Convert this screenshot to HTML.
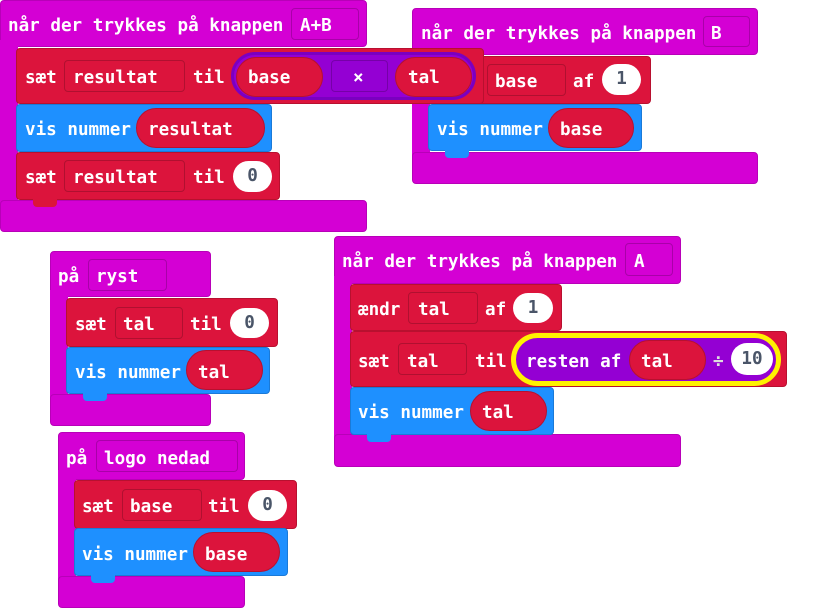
<!DOCTYPE html>
<html><head><meta charset="utf-8"><style>
body{margin:0;width:839px;height:609px;background:#fff;position:relative;overflow:hidden;font-family:"DejaVu Sans Mono","Liberation Mono",monospace;font-weight:bold;font-size:17.6px;color:#fff}
div{position:absolute;box-sizing:border-box}
.m{background:#d400d4;border:1px solid #b800b8;border-radius:4px}
.arm{border:none}
.r{background:#dc143c;border:1px solid #b8102f;border-radius:4px}
.b{background:#1e90ff;border:1px solid #1a7ad8;border-radius:4px}
.p{background:#9400d3;border:1px solid #7a00b0}
.f{border:1px solid rgba(0,0,0,.2);border-radius:4px}
.pill{border-radius:20px}
.w{background:#fff;border-radius:16px;color:#4a5568;text-align:center}
.t{line-height:20px;white-space:pre;margin-top:2px}
.w.t{margin-top:0}
.nr{background:#dc143c}.nb{background:#1e90ff}
.n{height:8px;width:24px;border-radius:0 0 4px 4px}
</style></head><body>

<!-- Block 1 -->
<div class="m" style="left:0;top:0;width:367px;height:47px"></div>
<div class="m arm" style="left:0;top:40px;width:18px;height:170px;border-radius:0"></div>
<div class="m" style="left:0;top:200px;width:367px;height:32px"></div>
<div class="t" style="left:8px;top:14px">når der trykkes på knappen</div>
<div class="f" style="left:291px;top:8px;width:68px;height:32px"></div>
<div class="t" style="left:300px;top:14px">A+B</div>

<!-- Block 2 -->
<div class="m" style="left:412px;top:8px;width:346px;height:47px"></div>
<div class="m arm" style="left:412px;top:50px;width:18px;height:110px;border-radius:0"></div>
<div class="m" style="left:412px;top:152px;width:346px;height:32px"></div>
<div class="t" style="left:421px;top:22px">når der trykkes på knappen</div>
<div class="f" style="left:703px;top:16px;width:47px;height:31px"></div>
<div class="t" style="left:711px;top:22px">B</div>
<div class="r" style="left:428px;top:56px;width:223px;height:48px"></div>
<div class="f" style="left:487px;top:64px;width:79px;height:32px"></div>
<div class="t" style="left:495px;top:70px">base</div>
<div class="t" style="left:573px;top:70px">af</div>
<div class="w t" style="left:602px;top:64px;width:39px;height:31px;line-height:31px">1</div>
<div class="b" style="left:428px;top:104px;width:214px;height:47px"></div>
<div class="nb n" style="left:445px;top:150px"></div>
<div class="t" style="left:437px;top:118px">vis nummer</div>
<div class="r pill" style="left:548px;top:108px;width:86px;height:40px"></div>
<div class="t" style="left:560px;top:118px">base</div>

<!-- Block 1 body -->
<div class="r" style="left:16px;top:48px;width:468px;height:56px"></div>
<div class="t" style="left:25px;top:66px">sæt</div>
<div class="f" style="left:64px;top:60px;width:121px;height:32px"></div>
<div class="t" style="left:73px;top:66px">resultat</div>
<div class="t" style="left:193px;top:66px">til</div>
<div class="p pill" style="left:231px;top:52px;width:245px;height:48px;border:3px solid #7a00c0;border-radius:24px"></div>
<div class="r pill" style="left:236px;top:57px;width:87px;height:40px"></div>
<div class="t" style="left:248px;top:66px">base</div>
<div class="f" style="left:331px;top:60px;width:57px;height:32px"></div>
<div class="t" style="left:353px;top:66px">×</div>
<div class="r pill" style="left:395px;top:57px;width:77px;height:40px"></div>
<div class="t" style="left:408px;top:66px">tal</div>
<div class="b" style="left:16px;top:104px;width:256px;height:48px"></div>
<div class="t" style="left:25px;top:118px">vis nummer</div>
<div class="r pill" style="left:136px;top:108px;width:129px;height:40px"></div>
<div class="t" style="left:148px;top:118px">resultat</div>
<div class="r" style="left:16px;top:152px;width:264px;height:48px"></div>
<div class="nr n" style="left:33px;top:199px"></div>
<div class="t" style="left:25px;top:166px">sæt</div>
<div class="f" style="left:64px;top:160px;width:121px;height:32px"></div>
<div class="t" style="left:73px;top:166px">resultat</div>
<div class="t" style="left:193px;top:166px">til</div>
<div class="w t" style="left:233px;top:161px;width:39px;height:31px;line-height:31px">0</div>

<!-- Block 3 -->
<div class="m" style="left:50px;top:251px;width:161px;height:46px"></div>
<div class="m arm" style="left:50px;top:290px;width:18px;height:110px;border-radius:0"></div>
<div class="m" style="left:50px;top:394px;width:161px;height:32px"></div>
<div class="t" style="left:58px;top:265px">på</div>
<div class="f" style="left:88px;top:259px;width:79px;height:32px"></div>
<div class="t" style="left:96px;top:265px">ryst</div>
<div class="r" style="left:66px;top:298px;width:212px;height:49px"></div>
<div class="t" style="left:75px;top:313px">sæt</div>
<div class="f" style="left:115px;top:307px;width:68px;height:32px"></div>
<div class="t" style="left:123px;top:313px">tal</div>
<div class="t" style="left:190px;top:313px">til</div>
<div class="w t" style="left:230px;top:308px;width:39px;height:30px;line-height:30px">0</div>
<div class="b" style="left:66px;top:347px;width:204px;height:47px"></div>
<div class="nb n" style="left:83px;top:393px"></div>
<div class="t" style="left:75px;top:361px">vis nummer</div>
<div class="r pill" style="left:186px;top:350px;width:77px;height:40px"></div>
<div class="t" style="left:198px;top:361px">tal</div>

<!-- Block 4 -->
<div class="m" style="left:58px;top:432px;width:187px;height:48px"></div>
<div class="m arm" style="left:58px;top:470px;width:18px;height:110px;border-radius:0"></div>
<div class="m" style="left:58px;top:576px;width:187px;height:32px"></div>
<div class="t" style="left:66px;top:447px">på</div>
<div class="f" style="left:96px;top:440px;width:142px;height:32px"></div>
<div class="t" style="left:104px;top:447px">logo nedad</div>
<div class="r" style="left:74px;top:480px;width:223px;height:49px"></div>
<div class="t" style="left:82px;top:495px">sæt</div>
<div class="f" style="left:122px;top:489px;width:80px;height:32px"></div>
<div class="t" style="left:130px;top:495px">base</div>
<div class="t" style="left:208px;top:495px">til</div>
<div class="w t" style="left:248px;top:490px;width:39px;height:31px;line-height:31px">0</div>
<div class="b" style="left:74px;top:528px;width:214px;height:48px"></div>
<div class="nb n" style="left:91px;top:575px"></div>
<div class="t" style="left:82px;top:543px">vis nummer</div>
<div class="r pill" style="left:193px;top:532px;width:87px;height:40px"></div>
<div class="t" style="left:205px;top:543px">base</div>

<!-- Block 5 -->
<div class="m" style="left:334px;top:236px;width:347px;height:48px"></div>
<div class="m arm" style="left:334px;top:276px;width:18px;height:165px;border-radius:0"></div>
<div class="m" style="left:334px;top:434px;width:347px;height:33px"></div>
<div class="t" style="left:342px;top:250px">når der trykkes på knappen</div>
<div class="f" style="left:625px;top:243px;width:48px;height:33px"></div>
<div class="t" style="left:634px;top:250px">A</div>
<div class="r" style="left:350px;top:284px;width:212px;height:47px"></div>
<div class="t" style="left:358px;top:298px">ændr</div>
<div class="f" style="left:408px;top:292px;width:70px;height:32px"></div>
<div class="t" style="left:418px;top:298px">tal</div>
<div class="t" style="left:485px;top:298px">af</div>
<div class="w t" style="left:513px;top:293px;width:40px;height:30px;line-height:30px">1</div>
<div class="r" style="left:350px;top:331px;width:437px;height:56px"></div>
<div class="t" style="left:358px;top:350px">sæt</div>
<div class="f" style="left:398px;top:343px;width:69px;height:32px"></div>
<div class="t" style="left:407px;top:350px">tal</div>
<div class="t" style="left:475px;top:350px">til</div>
<div class="p" style="left:511px;top:333px;width:270px;height:53px;border:5px solid #fff200;border-radius:27px"></div>
<div class="t" style="left:526px;top:350px">resten af</div>
<div class="r pill" style="left:629px;top:340px;width:77px;height:40px"></div>
<div class="t" style="left:641px;top:350px">tal</div>
<div class="t" style="left:713px;top:350px;color:#ddd">÷</div>
<div class="w t" style="left:731px;top:343px;width:42px;height:32px;line-height:32px">10</div>
<div class="b" style="left:350px;top:387px;width:204px;height:48px"></div>
<div class="nb n" style="left:367px;top:434px"></div>
<div class="t" style="left:358px;top:401px">vis nummer</div>
<div class="r pill" style="left:470px;top:391px;width:77px;height:40px"></div>
<div class="t" style="left:482px;top:401px">tal</div>

</body></html>
